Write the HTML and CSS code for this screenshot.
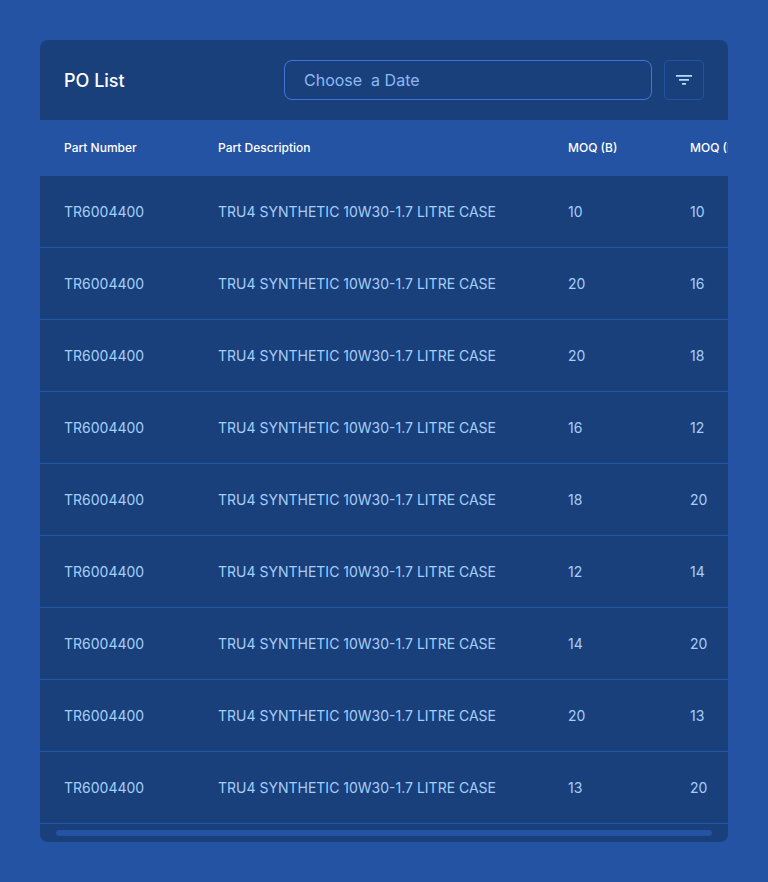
FILE: index.html
```html
<!DOCTYPE html>
<html lang="en">
<head>
<meta charset="utf-8">
<title>PO List</title>
<link rel="stylesheet" href="styles.css">
</head>
<body>
<main class="card">
  <header class="toolbar">
    <h1 class="title">PO List</h1>
    <div class="date-field">Choose &nbsp;a Date</div>
    <button class="filter" aria-label="Filter">
      <svg width="24" height="24" viewBox="0 0 24 24" fill="currentColor"><path d="M4 7h16v1.7H4zM7 11h10v1.8H7zM10 15h4v1.7h-4z"/></svg>
    </button>
  </header>
  <section class="table">
    <div class="row head"><span>Part Number</span><span>Part Description</span><span>MOQ (B)</span><span>MOQ (L)</span></div>
    <div class="row"><span>TR6004400</span><span>TRU4 SYNTHETIC 10W30-1.7 LITRE CASE</span><span>10</span><span>10</span></div>
    <div class="row"><span>TR6004400</span><span>TRU4 SYNTHETIC 10W30-1.7 LITRE CASE</span><span>20</span><span>16</span></div>
    <div class="row"><span>TR6004400</span><span>TRU4 SYNTHETIC 10W30-1.7 LITRE CASE</span><span>20</span><span>18</span></div>
    <div class="row"><span>TR6004400</span><span>TRU4 SYNTHETIC 10W30-1.7 LITRE CASE</span><span>16</span><span>12</span></div>
    <div class="row"><span>TR6004400</span><span>TRU4 SYNTHETIC 10W30-1.7 LITRE CASE</span><span>18</span><span>20</span></div>
    <div class="row"><span>TR6004400</span><span>TRU4 SYNTHETIC 10W30-1.7 LITRE CASE</span><span>12</span><span>14</span></div>
    <div class="row"><span>TR6004400</span><span>TRU4 SYNTHETIC 10W30-1.7 LITRE CASE</span><span>14</span><span>20</span></div>
    <div class="row"><span>TR6004400</span><span>TRU4 SYNTHETIC 10W30-1.7 LITRE CASE</span><span>20</span><span>13</span></div>
    <div class="row"><span>TR6004400</span><span>TRU4 SYNTHETIC 10W30-1.7 LITRE CASE</span><span>13</span><span>20</span></div>
  </section>
  <div class="scroll"><div class="thumb"></div></div>
</main>
</body>
</html>
```
FILE: styles.css
```css
* { box-sizing: border-box; }
body {
  margin: 0;
  padding: 40px;
  min-height: 882px;
  background: #2353a2;
  font-family: Inter, "Liberation Sans", sans-serif;
}
.card {
  height: 802px;
  background: #1a407c;
  border-radius: 8px;
  overflow: hidden;
}
.toolbar {
  display: flex;
  align-items: center;
  height: 80px;
  padding: 0 24px;
}
.title {
  flex: 1;
  margin: 0;
  color: #fff;
  font-size: 18px;
  font-weight: 500;
}
.date-field {
  display: flex;
  align-items: center;
  width: 368px;
  height: 40px;
  padding: 0 19px;
  border: 1px solid #3f75d6;
  border-radius: 8px;
  color: #8bb9f4;
  font-size: 16px;
}
.filter {
  display: grid;
  place-items: center;
  width: 40px;
  height: 40px;
  margin-left: 12px;
  padding: 0;
  border: 1px solid #2353a2;
  border-radius: 5px;
  background: none;
  color: #b3d9ff;
}
.row {
  display: grid;
  grid-template-columns: 154px 350px 122px 120px;
  align-items: center;
  height: 72px;
  padding-left: 24px;
  border-bottom: 1px solid #2554a6;
  color: #a4cffb;
  font-size: 14px;
  white-space: nowrap;
}
.head {
  height: 56px;
  padding-bottom: 1px;
  border: 0;
  background: #2353a2;
  color: #fff;
  font-size: 12px;
  font-weight: 500;
}
.scroll {
  padding: 6px 16px;
}
.thumb {
  height: 6px;
  border-radius: 3px;
  background: #2353a2;
}
```
